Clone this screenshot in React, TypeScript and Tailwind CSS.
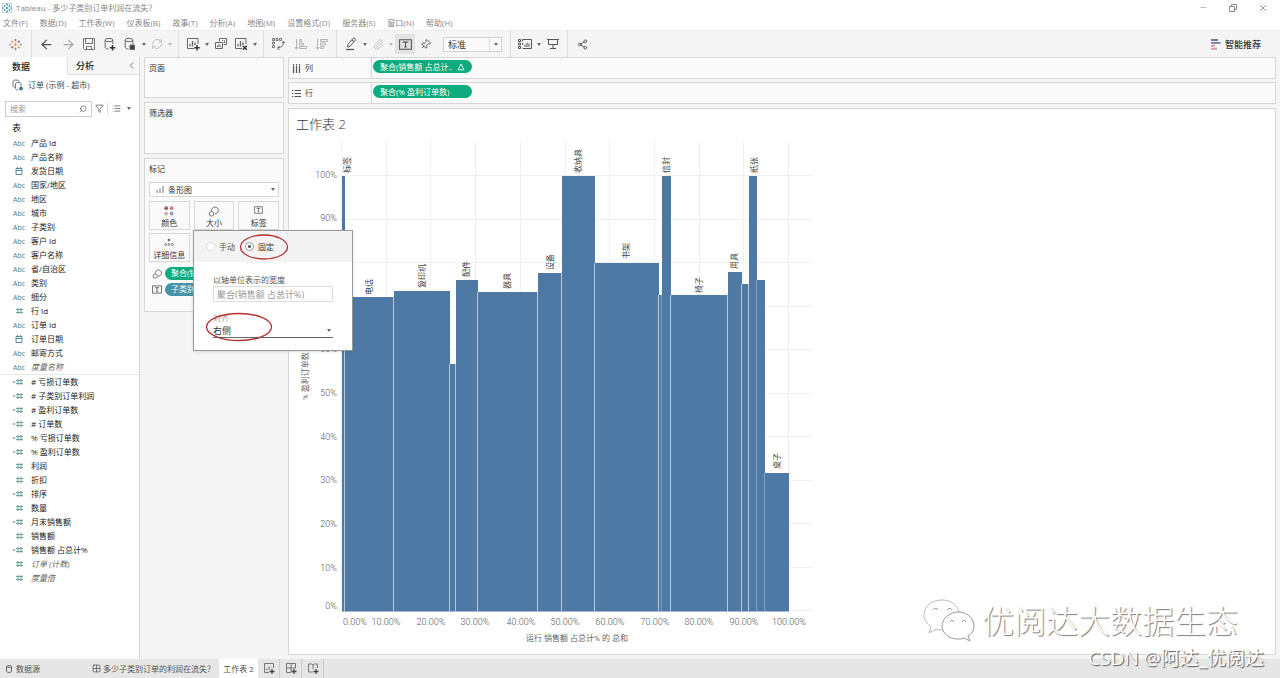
import React from "react";
import {
  ArrowLeft, ArrowRight, RefreshCw, Paperclip, Pin, Share2,
  Filter, Search, List, ChevronLeft, Minus, X, Grid2x2,
} from "lucide-react";

const menus = ["文件(F)", "数据(D)", "工作表(W)", "仪表板(B)", "故事(T)", "分析(A)", "地图(M)", "设置格式(O)", "服务器(S)", "窗口(N)", "帮助(H)"];

type Kind = "abc" | "date" | "num" | "calc";
type Field = [Kind, string, boolean?];

const dimensions: Field[] = [
  ["abc", "产品 Id"], ["abc", "产品名称"], ["date", "发货日期"], ["abc", "国家/地区"],
  ["abc", "地区"], ["abc", "城市"], ["abc", "子类别"], ["abc", "客户 Id"],
  ["abc", "客户名称"], ["abc", "省/自治区"], ["abc", "类别"], ["abc", "细分"],
  ["num", "行 Id"], ["abc", "订单 Id"], ["date", "订单日期"], ["abc", "邮寄方式"],
  ["abc", "度量名称", true],
];

const measures: Field[] = [
  ["calc", "# 亏损订单数"], ["calc", "# 子类别订单利润"], ["calc", "# 盈利订单数"],
  ["calc", "# 订单数"], ["calc", "% 亏损订单数"], ["calc", "% 盈利订单数"],
  ["num", "利润"], ["num", "折扣"], ["calc", "排序"], ["num", "数量"],
  ["calc", "月末销售额"], ["num", "销售额"], ["calc", "销售额 占总计%"],
  ["num", "订单 (计数)", true], ["num", "度量值", true],
];

// left, right, top of every bar in chart units
const bars: [number, number, number][] = [
  [342, 345, 176], [345, 394, 297], [394, 450, 291], [450, 456, 364], [456, 478, 280],
  [478, 538, 292], [538, 562, 273], [562, 595, 176], [595, 659, 263], [659, 662, 295],
  [662, 671, 176], [671, 728, 295], [728, 742, 272], [742, 749, 284], [749, 757, 176],
  [757, 765, 280], [765, 789, 473],
];

const barLabels: [string, number, number][] = [
  ["标签", 347, 173], ["电话", 369, 295], ["复印机", 422, 288], ["配件", 466, 277],
  ["器具", 507, 289], ["设备", 550, 270], ["收纳具", 578, 173], ["书架", 626, 259],
  ["信封", 666, 173], ["椅子", 699, 293], ["用具", 734, 269], ["纸张", 754, 173], ["桌子", 777, 469],
];

const yLabels: [string, number][] = [
  ["100%", 175], ["90%", 218], ["80%", 262], ["70%", 306], ["60%", 349], ["50%", 393],
  ["40%", 437], ["30%", 480], ["20%", 524], ["10%", 568], ["0%", 606],
];

const xLabels: [string, number][] = [
  ["0.00%", 355], ["10.00%", 386], ["20.00%", 431], ["30.00%", 475], ["40.00%", 521],
  ["50.00%", 565], ["60.00%", 610], ["70.00%", 655], ["80.00%", 699], ["90.00%", 744], ["100.00%", 789],
];

function Caret({ light = false }: { light?: boolean }) {
  return (
    <span className="flex w-2 shrink-0 justify-center">
      <svg width="4" height="3" viewBox="0 0 4 3"><path d="M0 0h4L2 3z" fill={light ? "#bbb" : "#666"} /></svg>
    </span>
  );
}

function Sep({ className }: { className: string }) {
  return <span className={"h-7 w-px shrink-0 bg-[#dcdcdc] " + className} />;
}

function Tool({ label, children, className = "w-5" }: { label: string; children: React.ReactNode; className?: string }) {
  return (
    <button type="button" aria-label={label} className={"flex h-5 shrink-0 items-center justify-center text-[#555] " + className}>
      {children}
    </button>
  );
}

function TableauMark({ size, mono = false }: { size: number; mono?: boolean }) {
  const c = mono ? ["#2f7f9a", "#2f7f9a", "#2f7f9a", "#2f7f9a"] : ["#e8a05c", "#7b8b9b", "#b8606c", "#7997a9"];
  return (
    <svg width={size} height={size} viewBox="0 0 14 14" fill="none" strokeWidth="1">
      {mono && <rect x=".5" y=".5" width="13" height="13" stroke="#a9cbd6" />}
      <path d="M7 4.8v4.4M4.8 7h4.4" stroke={c[0]} strokeWidth="1.2" />
      <path d="M7 .8v2.8M5.6 2.2h2.8M7 10.4v2.8M5.6 11.8h2.8" stroke={c[1]} />
      <path d="M3.5 2.6v2.8M2.1 4h2.8M10.5 8.6v2.8M9.1 10h2.8" stroke={c[0]} />
      <path d="M10.5 2.6v2.8M9.1 4h2.8M3.5 8.6v2.8M2.1 10h2.8" stroke={c[2]} />
      <path d="M.4 7h2M11.6 7h2M1.4 6v2M12.6 6v2" stroke={c[3]} />
    </svg>
  );
}

function DataIcon({ badge }: { badge: "plus" | "pause" }) {
  return (
    <svg width="12" height="14" viewBox="0 0 12 14" fill="none" stroke="#666" strokeWidth="1">
      <ellipse cx="5" cy="3" rx="3.8" ry="1.7" />
      <path d="M1.2 3v7.5c0 .9 1.6 1.5 3.3 1.6M8.800 3v4" />
      {badge === "plus" ? <path d="M8.5 8v5.4M5.8 10.7h5.4" strokeWidth="1.5" stroke="#333" /> : <path d="M6 8h4.5v4.5H6z" fill="#444" />}
    </svg>
  );
}

function SheetIcon({ badge }: { badge: "plus" | "x" }) {
  return (
    <svg width="14" height="14" viewBox="0 0 14 14" fill="none" stroke="#666">
      <path d="M12 7V1.5H1.5v10H8" />
      <path d="M4 9.5V7M6.5 9.5V4M9 8V5.5" strokeWidth="1.3" />
      {badge === "plus" ? <path d="M11 8v5.4M8.3 10.7h5.4" strokeWidth="1.5" stroke="#333" /> : <path d="M8.8 8.8l4 4M12.8 8.8l-4 4" strokeWidth="1.5" stroke="#333" />}
    </svg>
  );
}

function DuplicateIcon() {
  return (
    <svg width="14" height="14" viewBox="0 0 14 14" fill="none" stroke="#666">
      <path d="M5.500 4.500v-3h7v6h-3M1.500 5.500h7v6h-7z" />
      <path d="M3.500 10V8.500M5 10V7M6.500 10V8.500M8.500 4V3M10.500 6V3.500" />
    </svg>
  );
}

function SwapIcon() {
  return (
    <svg width="14" height="14" viewBox="0 0 14 14" fill="none" stroke="#666">
      <path d="M1.5 1.5h2v2h-2zM5 1.5h2v2H5zM8.500 1.500h2v2h-2zM1.5 5h2v2h-2zM1.5 8.500h2v2h-2z" strokeWidth=".9" />
      <path d="M12.500 4.500c0 4-2 6-6 6.500M10.800 6l1.700-1.800L14 6M8.500 9l-2 2 2 2" />
    </svg>
  );
}

function SortIcon({ desc = false }: { desc?: boolean }) {
  return (
    <svg width="13" height="13" viewBox="0 0 13 13" fill="none" stroke="#b5b5b5">
      <path d="M2.500 1v10M.7 9l1.800 2.200L4.300 9" />
      {desc
        ? <path d="M5.500 1.500h7v2h-7zM5.500 5h5v2h-5zM5.500 8.500h3v2h-3z" />
        : <path d="M5.500 1.500h2v2h-2zM5.500 5h4v2h-4zM5.500 8.500h7v2h-7z" />}
    </svg>
  );
}

function SizeIcon({ s = 12 }: { s?: number }) {
  return (
    <svg width={s} height={s} viewBox="0 0 12 12" fill="none" stroke="#666">
      <path d="M4 5.500a3.700 3.700 0 1 1 3 3" /><circle cx="3.800" cy="8.500" r="2.500" />
    </svg>
  );
}

function TextIcon({ w = 11, h = 9 }: { w?: number; h?: number }) {
  return (
    <svg width={w} height={h} viewBox="0 0 11 9" fill="none" stroke="#555">
      <path d="M.5.5h10v8H.5zM3.500 3V2.500h4V3M5.500 2.500v4M4.500 6.500h2" strokeWidth=".9" />
    </svg>
  );
}

function FieldIcon({ kind }: { kind: Kind }) {
  if (kind === "abc") return <span className="w-3 text-center text-[7px] text-[#3c7f93]">Abc</span>;
  return (
    <svg width="12" height="8" viewBox="0 0 12 8" fill="none" stroke="#3f8290" strokeWidth=".9">
      {kind === "date" ? (
        <path d="M3 1.500h6v6H3zM3 3.500h6M4.500 0v1.500M7.500 0v1.500" />
      ) : (
        <path d="M5 1v6M8 1v6M3 2.500h7M3 5.500h7" stroke="#5f9c96" />
      )}
      {kind === "calc" && <path d="M0 4h2.200" stroke="#5f9c96" strokeWidth="1.300" />}
    </svg>
  );
}

function FieldRow({ field }: { field: Field }) {
  const [kind, name, italic] = field;
  return (
    <li className={"flex h-3.5 items-center gap-1.5 pl-[13px] " + (italic ? "text-[#666]" : "text-[#222]")}>
      <FieldIcon kind={kind} />
      <span className={italic ? "italic" : ""}>{name}</span>
    </li>
  );
}

function Sidebar() {
  return (
    <aside className="w-[140px] shrink-0 border-r border-[#d6d6d6] bg-white">
      <div className="flex h-[18px] text-[9px] font-medium">
        <button type="button" className="w-[67px] pl-3 text-left text-[#222]">数据</button>
        <button type="button" className="flex flex-1 items-center justify-between border-b border-l border-[#e0e0e0] bg-[#f7f7f7] pl-2 pr-0.5 text-[#222]">
          分析<ChevronLeft size={11} strokeWidth={2} className="text-[#666]" />
        </button>
      </div>
      <div className="flex h-5 items-center gap-1 pl-3 text-[#444]">
        <svg width="12" height="12" viewBox="0 0 12 12" fill="none" stroke="#6b7b80">
          <path d="M1 2.500C1 .5 7 .5 7 2.500V4M1 2.500V7c0 1 1 1.500 2 1.500" />
          <path d="M3.500 5c0-2 5.500-2 5.500 0v2M3.500 5v4.500c0 1 1.500 1.500 3 1.500" />
          <circle cx="9" cy="9.500" r="2" fill="#3b7d94" stroke="none" />
        </svg>
        <span>订单 (示例 - 超市)</span>
      </div>
      <div className="flex h-6 items-center pl-[5px] pt-1 pb-px">
        <label className="flex h-4 w-[87px] items-center border border-[#ccc] bg-white px-1">
          <input aria-label="搜索" placeholder="搜索" className="w-full min-w-0 bg-transparent outline-none placeholder:text-[#999]" />
          <Search size={8} className="shrink-0 -scale-x-100 text-[#555]" />
        </label>
        <button type="button" aria-label="筛选" className="ml-[3px] text-[#555]"><Filter size={9} /></button>
        <Sep className="ml-[3px] !h-3" />
        <button type="button" aria-label="视图" className="ml-1 flex items-center gap-1 text-[#555]"><List size={9} /><Caret /></button>
      </div>
      <h2 className="flex h-[17px] items-center pl-3 text-[9px] text-[#222]">表</h2>
      <ul className="border-b border-[#e6e6e6]">{dimensions.map((f) => <FieldRow key={f[1]} field={f} />)}</ul>
      <ul>{measures.map((f) => <FieldRow key={f[1]} field={f} />)}</ul>
    </aside>
  );
}

const markBtn = "flex h-[29px] flex-col items-center justify-between border border-[#d8d8d8] bg-[#fafafa] pt-1 pb-0.5 text-[#333]";

function SizePopup() {
  return (
    <div className="absolute left-[48px] top-[71px] z-10 h-[121px] w-[160px] border border-[#999] bg-white shadow-sm">
      <div className="flex h-[31px] items-center bg-[#f3f3f3] pl-3">
        <label className="flex items-center gap-1 text-[#555]">
          <input type="radio" name="size-mode" className="size-[9px] appearance-none rounded-full border border-[#ddd] bg-white" />手动
        </label>
        <label className="ml-[10px] flex items-center gap-1 text-[#333]">
          <input type="radio" name="size-mode" defaultChecked className="size-[9px] appearance-none rounded-full border border-[#999] bg-white bg-[radial-gradient(circle,#555_0_1px,transparent_2px)]" />固定
        </label>
      </div>
      <div className="flex flex-col pl-[19px] pr-[19px] pt-3">
        <label htmlFor="axis-width" className="flex h-3 items-center text-[#555]">以轴单位表示的宽度</label>
        <input id="axis-width" defaultValue="聚合(销售额 占总计%)" className="h-4 w-full border border-[#ddd] px-[3px] text-[9px] text-[#999] outline-none" />
        <label htmlFor="align" className="mt-2.5 flex h-3 items-center text-[#a98]">对齐</label>
        <div className="flex h-[14px] items-center border-b border-[#666]">
          <select id="align" className="w-full appearance-none bg-transparent text-[9px] text-[#333] outline-none"><option>右侧</option></select>
          <Caret />
        </div>
      </div>
      <svg className="pointer-events-none absolute left-0 top-0" width="100" height="115" viewBox="194 231 100 115" fill="none" stroke="#b5302f" strokeWidth="1.300">
        <ellipse cx="264" cy="247" rx="23.500" ry="12" />
        <ellipse cx="239" cy="327" rx="32.500" ry="13.500" />
      </svg>
    </div>
  );
}

const card = "border border-[#d6d6d6] bg-[#fafafa]";

function Cards() {
  return (
    <div className="flex w-[148px] shrink-0 flex-col gap-1 pl-1 pr-1 text-[#333]">
      <section className={card + " h-[41px] px-1 pt-1 leading-3"}>页面</section>
      <section className={card + " h-[52px] px-1 pt-1 leading-3"}>筛选器</section>
      <section className={card + " relative h-[154px] px-1 pt-1 leading-3"}>
        <h3>标记</h3>
        <div className="mt-[7px] flex h-[15px] items-center border border-[#d8d8d8] bg-white pl-1.5 pr-px">
          <svg width="8" height="7" viewBox="0 0 8 7" fill="none" stroke="#888" strokeWidth="1.200"><path d="M1 7V4M4 7V2.500M7 7V0" /></svg>
          <select aria-label="标记类型" className="ml-1 flex-1 appearance-none bg-transparent outline-none"><option>条形图</option></select>
          <Caret />
        </div>
        <div className="mt-1 grid grid-cols-3 gap-x-1 gap-y-[3px]">
          <button type="button" className={markBtn}>
            <svg width="10" height="10" viewBox="0 0 10 10"><circle cx="2.200" cy="2.200" r="1.900" fill="#a0606a" /><circle cx="7.600" cy="2.200" r="1.900" fill="#c97d80" /><circle cx="2.200" cy="7.600" r="1.900" fill="#d9a8a0" /><circle cx="7.600" cy="7.600" r="1.900" fill="#9397b8" /></svg>
            <span className="leading-none">颜色</span>
          </button>
          <button type="button" className={markBtn}><SizeIcon s={11} /><span className="leading-none">大小</span></button>
          <button type="button" className={markBtn}><TextIcon w={9} h={8} /><span className="leading-none">标签</span></button>
          <button type="button" className={markBtn}>
            <svg width="10" height="9" viewBox="0 0 10 9" fill="none" stroke="#666" strokeWidth=".8"><circle cx="5" cy="2" r="1" fill="#666" /><circle cx="1.600" cy="6.500" r="1" /><circle cx="5" cy="6.500" r="1" /><circle cx="8.400" cy="6.500" r="1" /></svg>
            <span className="leading-none">详细信息</span>
          </button>
        </div>
        <div className="mt-[5px] flex flex-col gap-[3px]">
          <div className="flex items-center gap-[3px] pl-[3px]"><SizeIcon s={10} /><span className="h-[13px] flex-1 rounded-full bg-[#0dab7d] pl-1.5 text-white">聚合(销售额..</span></div>
          <div className="flex items-center gap-[3px] pl-[3px]"><TextIcon w={10} h={9} /><span className="h-[13px] flex-1 rounded-full bg-[#4593a8] pl-1.5 text-white">子类别</span></div>
        </div>
        <SizePopup />
      </section>
    </div>
  );
}

function Shelf({ label, pill, delta, vertical }: { label: string; pill: string; delta?: boolean; vertical?: boolean }) {
  return (
    <div className="flex h-[22px] items-stretch border border-[#d6d6d6] bg-[#fafafa]">
      <div className="flex w-[83px] items-center gap-1 border-r border-[#d6d6d6] pl-[3px] text-[#444]">
        <svg width="9" height="9" viewBox="0 0 9 9" stroke="#555" strokeWidth="1.200" fill="none">
          {vertical ? <path d="M1.500 0v1.500M4.500 0v1.500M7.500 0v1.500M1.500 2v7M4.500 2v7M7.500 2v7" /> : <path d="M0 1.500h1.200M0 4.500h1.200M0 7.500h1.200M2.500 1.500H9M2.500 4.500H9M2.500 7.500H9" />}
        </svg>
        {label}
      </div>
      <div className="pl-px pt-0.5">
        <span className="flex h-[13px] w-[99px] items-center justify-between rounded-full bg-[#0dab7d] pl-[7px] pr-[7px] text-white">
          {pill}
          {delta && <svg width="8" height="8" viewBox="0 0 8 8" fill="none" stroke="#fff" strokeWidth=".9"><path d="M4 1l3 5.800H1z" /></svg>}
        </span>
      </div>
    </div>
  );
}

function Chart() {
  const ticks = Array.from({ length: 11 }, (_, i) => i);
  return (
    <svg width="530" height="508" viewBox="289 140 530 508" className="font-[Roboto,'Noto_Sans_CJK_SC',sans-serif]">
      <g stroke="#f1f1f1">
        {ticks.map((i) => <line key={"h" + i} x1="338" x2="812" y1={Math.round(611 - i * 43.5) - 0.5} y2={Math.round(611 - i * 43.5) - 0.5} />)}
        {ticks.map((i) => <line key={"v" + i} y1="141" y2="612" x1={Math.round(341 + i * 44.7) + 0.5} x2={Math.round(341 + i * 44.7) + 0.5} />)}
      </g>
      {bars.map(([l, r, t]) => <rect key={l} x={l} y={t} width={r - l} height={611.5 - t} fill="#4e79a5" />)}
      {bars.slice(1).map(([l, , t], i) => (
        <line key={l} x1={l - 0.5} x2={l - 0.5} y1={Math.max(t, bars[i][2])} y2="611.5" stroke="#b4c9dd" strokeWidth={l > 750 || l === 662 ? 0.5 : 1} />
      ))}
      <g fontSize="8" fill="#444">
        {barLabels.map(([s, x, y]) => <text key={s} transform={`translate(${x + 3} ${y}) rotate(-90)`}>{s}</text>)}
      </g>
      <g fontSize="9" fontWeight="300" fill="#555">
        {yLabels.map(([s, y]) => <text key={s} x="337" y={y + 3} textAnchor="end">{s}</text>)}
        {xLabels.map(([s, x]) => <text key={s} x={x} y="625" textAnchor="middle">{s}</text>)}
      </g>
      <g fontSize="8" fill="#666">
        <text x="577" y="641" textAnchor="middle">运行 销售额 占总计% 的 总和</text>
        <text transform="translate(308 400) rotate(-90)">% 盈利订单数</text>
      </g>
    </svg>
  );
}

function Toolbar() {
  return (
    <div className="flex h-[27px] items-center border-t border-[#eee] bg-[#f5f5f5] pl-1">
      <Tool label="开始页面" className="w-[22px]"><TableauMark size={13} /></Tool>
      <Sep className="ml-[5px] mr-1" />
      <Tool label="撤消"><ArrowLeft size={15} strokeWidth={2} /></Tool>
      <Tool label="重做" className="ml-0.5 w-5"><ArrowRight size={15} strokeWidth={2} className="text-[#aaa]" /></Tool>
      <Tool label="保存" className="ml-px w-5">
        <svg width="12" height="12" viewBox="0 0 12 12" fill="none" stroke="#666"><path d="M.5.5h11v11h-10l-1-1zM2.500.500v5h7v-5M3.500 11.500V8.500h5v3" strokeWidth=".9" /></svg>
      </Tool>
      <Tool label="新建数据源" className="ml-px w-5"><DataIcon badge="plus" /></Tool>
      <Tool label="暂停更新"><DataIcon badge="pause" /></Tool>
      <Caret />
      <Tool label="刷新" className="w-[18px]"><RefreshCw size={12} strokeWidth={1.8} className="text-[#bbb]" /></Tool>
      <Caret light />
      <Sep className="ml-1 mr-1" />
      <Tool label="新建工作表"><SheetIcon badge="plus" /></Tool>
      <Caret />
      <Tool label="复制"><DuplicateIcon /></Tool>
      <Tool label="清除"><SheetIcon badge="x" /></Tool>
      <Caret />
      <Sep className="ml-1 mr-1" />
      <Tool label="交换行和列"><SwapIcon /></Tool>
      <Tool label="升序" className="ml-0.5 w-5"><SortIcon /></Tool>
      <Tool label="降序" className="ml-px w-5"><SortIcon desc /></Tool>
      <Sep className="ml-[5px] mr-1" />
      <Tool label="突出显示">
        <svg width="12" height="14" viewBox="0 0 12 14" fill="none" stroke="#555"><path d="M2.500 10l.6-2.800L8 1.500c1-1 3 .5 2 1.800L5.200 9.200zM7 3l2 1.700" /><path d="M1 12.500h8" strokeWidth="1.300" /></svg>
      </Tool>
      <Caret />
      <Tool label="分组" className="w-[18px]"><Paperclip size={11} strokeWidth={1.8} className="text-[#bbb]" /></Tool>
      <Caret light />
      <Tool label="显示标记标签" className="w-5 bg-[#e2e2e2]"><TextIcon w={13} h={11} /></Tool>
      <Tool label="固定轴"><Pin size={11} className="rotate-45" /></Tool>
      <div className="ml-2 flex h-[15px] w-[59px] shrink-0 items-center border border-[#d0d0d0] bg-[#fafafa]">
        <select aria-label="适合" className="min-w-0 flex-1 appearance-none bg-transparent pl-1 text-[9px] text-[#333] outline-none"><option>标准</option></select>
        <span className="flex h-full w-3 items-center justify-center border-l border-[#ddd]"><Caret /></span>
      </div>
      <Sep className="ml-2 mr-1" />
      <Tool label="显示/隐藏卡">
        <svg width="14" height="11" viewBox="0 0 14 11" fill="none" stroke="#555"><path d="M4.500 2.500V.5h9v9h-9M.5.5h2v2h-2zM.5 4h2v2h-2zM.5 7.500h2v2h-2zM4.500 4v2M7 8V5.500M9 8V3.500M11 8V4.500" /></svg>
      </Tool>
      <Caret />
      <Tool label="演示模式" className="w-5">
        <svg width="12" height="12" viewBox="0 0 12 12" fill="none" stroke="#555"><path d="M0 1.500h12M1.500 1.500v5h9v-5M6 6.500v4M3 10.500h6" /></svg>
      </Tool>
      <Sep className="ml-1 mr-1" />
      <Tool label="共享"><Share2 size={11} /></Tool>
      <button type="button" className="ml-auto mr-[19px] flex items-center gap-1 text-[9px] font-medium text-[#333]">
        <svg width="10" height="11" viewBox="0 0 10 11"><path d="M0 0h7v2H0zM0 3h9.500v1.800H0z" fill="#6f7b9c" /><path d="M0 5.800h4v2H0zM0 8.800h6v2H0z" fill="#dc989c" /></svg>
        智能推荐
      </button>
    </div>
  );
}

function AddTab({ label, d }: { label: string; d: string }) {
  return (
    <button type="button" aria-label={label} className="flex w-[22px] items-center justify-center border-r border-[#ccc]">
      <svg width="12" height="11" viewBox="0 0 12 11" fill="none" stroke="#777"><path d={d} /><path d="M9 6v5M6.500 8.500h5" stroke="#444" strokeWidth="1.300" /></svg>
    </button>
  );
}

function Watermark() {
  return (
    <div className="pointer-events-none absolute bottom-0 right-0 flex flex-col items-end pb-[3px] text-white">
      <div className="mr-[42px] flex h-10 items-center gap-1.5 text-[32px] font-light [text-shadow:1px_1px_1px_#777]">
        <svg width="54" height="46" viewBox="0 0 54 46" fill="#fff" strokeWidth="1">
          <path d="M37 14C35 6 28 2 20 2 10 2 2 8 2 17c0 5 3 9 7 12l-2 6 7-4c3 1 5 1 8 1" stroke="#bbb" />
          <path d="M36 14c9 0 16 6 16 14 0 4-2 8-6 10l2 5-6-3c-2 1-4 1-6 1-9 0-16-6-16-13s7-14 16-14z" stroke="#999" />
          <path d="M11 12c1-2 4-2 5 0M25 12c1-2 4-2 5 0M28 24c1-2 3-2 4 0M40 24c1-2 3-2 4 0" fill="none" stroke="#888" />
        </svg>
        优阅达大数据生态
      </div>
      <div className="mr-4 text-[19px] leading-[34px] [text-shadow:1px_1px_1px_#555]">CSDN @阿达_优阅达</div>
    </div>
  );
}

export default function App() {
  return (
    <div lang="zh-CN" className="relative flex min-h-screen flex-col overflow-hidden bg-[#f5f5f5] font-['Open_Sans','Noto_Sans_CJK_SC',sans-serif] text-[8px] leading-none">
      <header className="flex h-[15px] items-center justify-between bg-white pl-0.5 text-[#888]">
        <div className="flex items-center gap-1"><TableauMark size={10} mono /><h1>Tableau - 多少子类别订单利润在流失？</h1></div>
        <div className="flex items-center gap-[21px] pr-3 text-[#888]">
          <button type="button" aria-label="最小化"><Minus size={9} strokeWidth={1.5} /></button>
          <button type="button" aria-label="还原">
            <svg width="8" height="8" viewBox="0 0 8 8" fill="none" stroke="#888"><path d="M.5 2.500h5v5h-5zM2.500 2.500v-2h5v5h-2" /></svg>
          </button>
          <button type="button" aria-label="关闭"><X size={10} strokeWidth={2} /></button>
        </div>
      </header>
      <nav className="flex h-[15px] items-center gap-3 bg-white pl-[3px] text-[#888]">
        {menus.map((m) => <button type="button" key={m}>{m}</button>)}
      </nav>
      <Toolbar />
      <div className="flex flex-1">
        <Sidebar />
        <Cards />
        <main className="flex min-w-0 flex-1 flex-col pb-1 pr-1">
          <Shelf label="列" pill="聚合(销售额 占总计.." delta vertical />
          <div className="h-[3px]" />
          <Shelf label="行" pill="聚合(% 盈利订单数)" />
          <section className="mt-1 flex-1 border border-[#d6d6d6] bg-white">
            <h2 className="flex h-[31px] items-center pl-[7px] text-[13px] font-light text-[#333]">工作表 2</h2>
            <Chart />
          </section>
        </main>
      </div>
      <footer className="flex h-[19px] shrink-0 items-stretch bg-[#e6e6e6] text-[#555]">
        <button type="button" className="flex w-[88px] items-center gap-1 pl-1.5">
          <svg width="6" height="8" viewBox="0 0 6 8" fill="none" stroke="#666"><path d="M.5 1.500C.5.3 5.500.3 5.500 1.500v5c0 1.200-5 1.200-5 0zM.5 1.500c0 1.200 5 1.200 5 0" /></svg>数据源
        </button>
        <button type="button" className="flex w-[131px] items-center gap-0.5 pl-1"><Grid2x2 size={9} className="text-[#555]" />多少子类别订单的利润在流失？</button>
        <button type="button" className="w-[39px] bg-white">工作表 2</button>
        <AddTab label="新建工作表" d="M10.500 5V.5h-9v9H6M4 7.500V5.500M6 7V3.500M8 5V4.500" />
        <AddTab label="新建仪表板" d="M10.500 5V.5h-9v9H6M6 .5v9M1.500 5h9" />
        <AddTab label="新建故事" d="M10.500 5V1h-3L6 2 4.500 1h-3v8H6M6 2v4" />
      </footer>
      <Watermark />
    </div>
  );
}
